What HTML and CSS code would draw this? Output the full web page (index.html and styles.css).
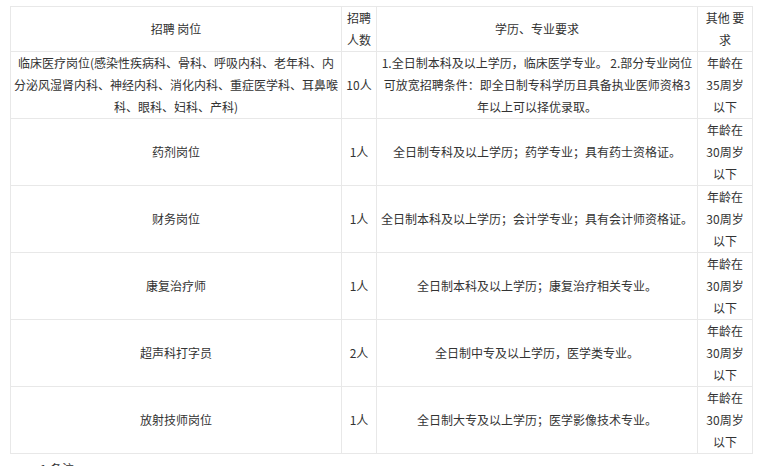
FILE: index.html
```html
<!DOCTYPE html>
<html lang="zh-CN">
<head>
<meta charset="utf-8">
<title>招聘岗位</title>
<link rel="stylesheet" href="styles.css">
</head>
<body>
<div class="page">
  <table class="jobs">
    <colgroup>
      <col class="c-post">
      <col class="c-num">
      <col class="c-req">
      <col class="c-other">
    </colgroup>
    <tr>
      <td class="post">招聘 岗位</td>
      <td class="num">招聘人数</td>
      <td class="req">学历、专业要求</td>
      <td class="other">其他 要求</td>
    </tr>
    <tr>
      <td class="post">临床医疗岗位(感染性疾病科、骨科、呼吸内科、老年科、内分泌风湿肾内科、神经内科、消化内科、重症医学科、耳鼻喉科、眼科、妇科、产科)</td>
      <td class="num">10人</td>
      <td class="req">1.全日制本科及以上学历，临床医学专业。 2.部分专业岗位可放宽招聘条件：即全日制专科学历且具备执业医师资格3年以上可以择优录取。</td>
      <td class="other">年龄在35周岁以下</td>
    </tr>
    <tr>
      <td class="post">药剂岗位</td>
      <td class="num">1人</td>
      <td class="req">全日制专科及以上学历；药学专业；具有药士资格证。</td>
      <td class="other">年龄在30周岁以下</td>
    </tr>
    <tr>
      <td class="post">财务岗位</td>
      <td class="num">1人</td>
      <td class="req">全日制本科及以上学历；会计学专业；具有会计师资格证。</td>
      <td class="other">年龄在30周岁以下</td>
    </tr>
    <tr>
      <td class="post">康复治疗师</td>
      <td class="num">1人</td>
      <td class="req">全日制本科及以上学历；康复治疗相关专业。</td>
      <td class="other">年龄在30周岁以下</td>
    </tr>
    <tr>
      <td class="post">超声科打字员</td>
      <td class="num">2人</td>
      <td class="req">全日制中专及以上学历，医学类专业。</td>
      <td class="other">年龄在30周岁以下</td>
    </tr>
    <tr>
      <td class="post">放射技师岗位</td>
      <td class="num">1人</td>
      <td class="req">全日制大专及以上学历；医学影像技术专业。</td>
      <td class="other">年龄在30周岁以下</td>
    </tr>
  </table>
  <p class="note">1.备注：</p>
</div>
</body>
</html>
```
FILE: styles.css
```css
html, body {
  margin: 0;
  padding: 0;
  background: #ffffff;
}

body {
  font-family: "Noto Sans CJK SC", "Noto Sans", sans-serif;
  font-size: 12px;
  color: #333333;
}

.page {
  padding: 6px 0 0 10px;
}

.jobs {
  border-collapse: collapse;
  table-layout: fixed;
  width: 742px;
}

.c-post { width: 331px; }
.c-num { width: 35px; }
.c-req { width: 321px; }
.c-other { width: 55px; }

.jobs td {
  border: 1px solid #e8e8e8;
  text-align: center;
  vertical-align: middle;
  line-height: 22px;
  padding: 0;
}

.jobs td.post { padding: 0 2px; }
.jobs td.num { padding: 0 3px; }
.jobs td.req { padding: 0 1px; }
.jobs td.other { padding: 0 4px; }

.note {
  margin: 4px 0 0 30px;
  line-height: 22px;
}
```
